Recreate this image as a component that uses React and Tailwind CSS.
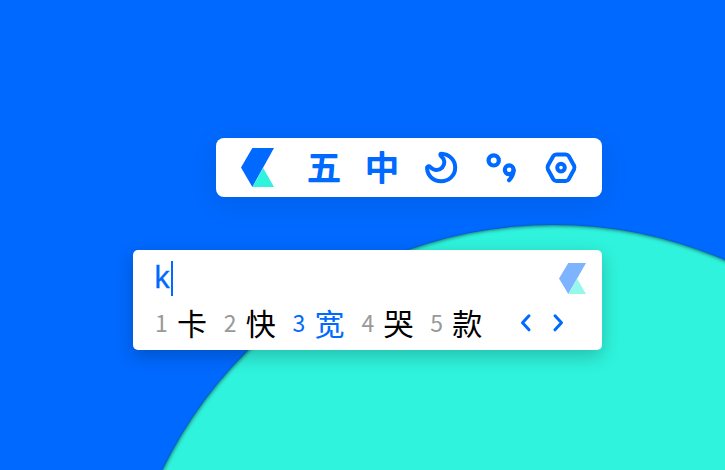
function Logo({ className }) {
  return (
    <svg viewBox="0 0 32 38" preserveAspectRatio="none" className={className}>
      <path d="M11 0H32L11 38L0 19Z" fill="#0069ff" />
      <path d="M21.5 19.4L32 38H11Z" fill="#2ff3dc" />
    </svg>
  );
}

const stroke = { fill: "none", stroke: "#0069ff", strokeLinecap: "round", strokeLinejoin: "round" };

function GlyphButton({ char, y, size }) {
  return (
    <svg viewBox="0 0 36 40" className="h-10 w-9 shrink-0 overflow-visible">
      <text
        x="18"
        y={y}
        textAnchor="middle"
        fontSize={size}
        fill="#0069ff"
        stroke="#0069ff"
        strokeWidth="1.8"
        strokeLinejoin="round"
        className="font-['Noto_Sans_CJK_SC',sans-serif] font-normal"
      >
        {char}
      </text>
    </svg>
  );
}

function Toolbar() {
  return (
    <div className="ml-[216px] flex h-[59px] w-[386px] items-center rounded-[8px] bg-white pl-[25px] shadow-[0_6px_28px_rgba(0,0,0,0.1)]">
      <Logo className="h-[39px] w-[33px] shrink-0" />
      <div className="ml-[32px] flex">
        <GlyphButton char="五" y="31.6" size="33" />
      </div>
      <div className="ml-[22px] flex">
        <GlyphButton char="中" y="32.4" size="33.5" />
      </div>
      <svg viewBox="0 0 36 40" className="ml-[23px] h-10 w-9 shrink-0" {...stroke} strokeWidth="4">
        <path d="M18.4 5.7C26 6 32.2 11.8 32.2 19.4C32.2 27.5 26 33.2 18 33.2C10.5 33.2 4.7 28 4.1 20.5C3.9 18.3 6 17.6 7.4 19.1C9.2 21 11.3 22 13.8 21.9C18.3 21.7 21.6 18 21.3 13.6C21.2 11.4 19.8 9.7 18.2 8.3C17 7.2 17 5.8 18.4 5.7Z" />
      </svg>
      <svg viewBox="0 0 36 40" className="ml-6 h-10 w-9 shrink-0" {...stroke} strokeWidth="4.2">
        <circle cx="10.7" cy="12.4" r="5.1" />
        <circle cx="26.2" cy="21.8" r="4.4" />
        <path d="M30.6 22.2C30.6 26.2 28.8 29.2 26.1 32.2" />
      </svg>
      <svg viewBox="0 0 36 40" className="ml-6 h-10 w-9 shrink-0" {...stroke} strokeWidth="4">
        <path d="M13.3 6.4H22.7Q24.7 6.4 25.7 8.1L31 17.4Q32 19.5 31 21.6L25.7 31.2Q24.7 32.9 22.7 32.9H13.3Q11.3 32.9 10.3 31.2L5 21.6Q4 19.5 5 17.4L10.3 8.1Q11.3 6.4 13.3 6.4Z" />
        <circle cx="18" cy="19.6" r="3.8" />
      </svg>
    </div>
  );
}

const candidates = ["卡", "快", "宽", "哭", "款"];

function CandidatePanel() {
  return (
    <div className="ml-[133px] mt-[53px] h-[100px] w-[469px] rounded-[5px] bg-white pl-[22px] shadow-[0_6px_18px_rgba(0,0,0,0.22)]">
      <div className="flex h-[50px] justify-between pr-4">
        <div className="flex pt-[11px]">
          <span className="-mt-[2px] w-4 font-['Noto_Sans',sans-serif] text-[30px] leading-[36px] text-[#0069ff] [-webkit-text-stroke:0.3px_#0069ff]">
            <span className="-ml-[1px]">k</span>
          </span>
          <span className="h-[35px] w-[2px] bg-[#0069ff]" />
        </div>
        <Logo className="mt-[13px] h-[31px] w-[27px] opacity-50" />
      </div>
      <div className="flex h-[46px] items-center">
        {candidates.map((char, i) => (
          <div
            key={char}
            className={"-mt-[2px] flex w-[68.8px] shrink-0 items-center " + (i === 2 ? "text-[#0069ff]" : "text-black")}
          >
            <span className={"w-[22px] text-[23px] leading-[40px] " + (i === 2 ? "" : "text-[#999]")}>{i + 1}</span>
            <span className="text-[30px] leading-[40px]">{char}</span>
          </div>
        ))}
        <svg viewBox="0 0 48 24" className="ml-[20px] h-6 w-12 shrink-0" {...stroke} strokeWidth="3">
          <path d="M10 4.8L3.5 11.8L10 18.8" />
          <path d="M36 4.8L42.5 11.8L36 18.8" />
        </svg>
      </div>
    </div>
  );
}

export default function App() {
  return (
    <div className="relative h-[470px] w-[725px] overflow-hidden bg-[#0069ff] font-['Noto_Sans_CJK_SC',sans-serif]">
      <div className="absolute left-[118.5px] top-[225px] size-[869px] rounded-full bg-[#2ff3dc] shadow-[0_0_2px_rgba(0,0,0,0.4),inset_0_0_4px_rgba(0,0,0,0.75)]" />
      <div className="relative pt-[138px]">
        <Toolbar />
        <CandidatePanel />
      </div>
    </div>
  );
}
